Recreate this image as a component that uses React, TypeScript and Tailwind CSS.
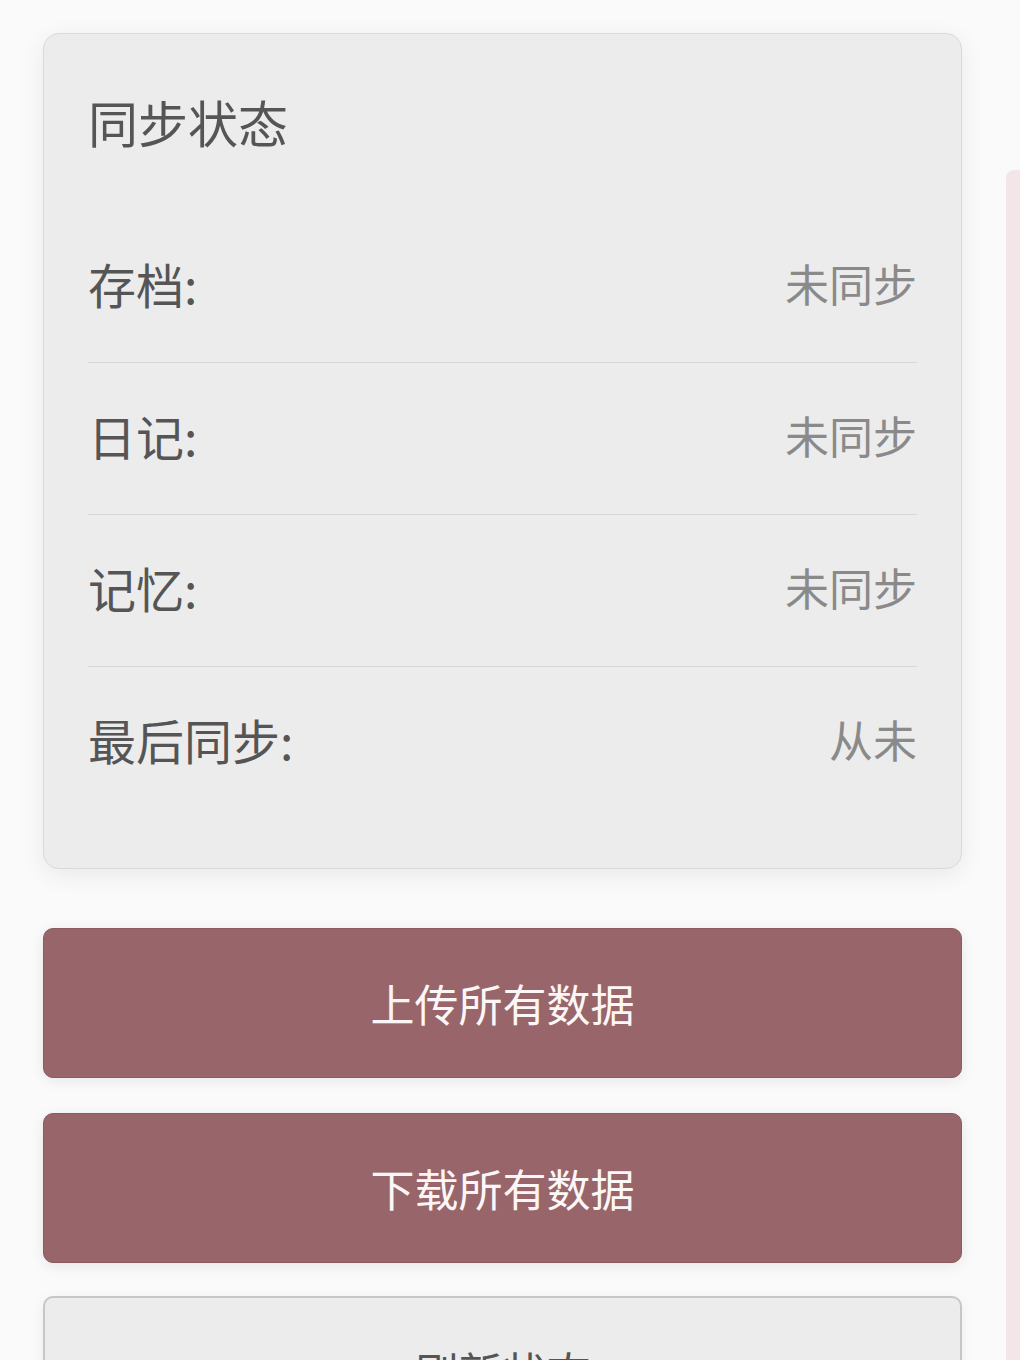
import React from 'react';

const rows = [
  { label: '存档:', value: '未同步' },
  { label: '日记:', value: '未同步' },
  { label: '记忆:', value: '未同步' },
  { label: '最后同步:', value: '从未' },
];

export default function App() {
  return (
    <div
      className="flex h-[1360px] w-full overflow-hidden bg-[#fafafa]"
      style={{ fontFamily: '"Noto Sans CJK SC", "Noto Sans", sans-serif' }}
    >
      {/* 主体 */}
      <div className="flex w-[1006px] shrink-0 flex-col pl-[43px] pr-[44px]">
        {/* 同步状态卡片 */}
        <div className="mt-[33px] flex shrink-0 flex-col rounded-[16px] border border-[#dadada] bg-[#ececec] px-[44px] pb-[50px] pt-[54px] shadow-[0_6px_24px_rgba(0,0,0,0.07)]">
          <h2 className="mb-[57px] text-[50px] font-normal leading-[66px] text-[#555555]">同步状态</h2>
          {rows.map((r, i) => (
            <div
              key={r.label}
              className={
                i < rows.length - 1
                  ? 'flex h-[152px] items-center justify-between border-b border-[#d8d8d8] pb-[8px]'
                  : 'flex h-[151px] items-center justify-between pb-[8px]'
              }
            >
              <span className="text-[48px] leading-none text-[#555555]">{r.label}</span>
              <span className="text-[44px] leading-none text-[#8a8a8a]">{r.value}</span>
            </div>
          ))}
        </div>

        {/* 按钮 */}
        <button
          type="button"
          className="mt-[59px] h-[150px] w-full shrink-0 rounded-[10px] border border-[#8a5b5f] bg-[#98666a] text-[44px] text-[#fdf6f6] shadow-[0_3px_14px_rgba(0,0,0,0.08)]"
        >
          上传所有数据
        </button>
        <button
          type="button"
          className="mt-[35px] h-[150px] w-full shrink-0 rounded-[10px] border border-[#8a5b5f] bg-[#98666a] text-[44px] text-[#fdf6f6] shadow-[0_3px_14px_rgba(0,0,0,0.08)]"
        >
          下载所有数据
        </button>
        <button
          type="button"
          className="mt-[33px] h-[150px] w-full shrink-0 rounded-[10px] border-2 border-[#c6c6c6] bg-[#ececec] text-[44px] text-[#555555] shadow-[0_3px_14px_rgba(0,0,0,0.06)]"
        >
          刷新状态
        </button>
      </div>

      {/* 右侧滚动条 */}
      <div className="mt-[170px] w-[14px] shrink-0 rounded-tl-[8px] bg-[#f3e6e8]" />
    </div>
  );
}
